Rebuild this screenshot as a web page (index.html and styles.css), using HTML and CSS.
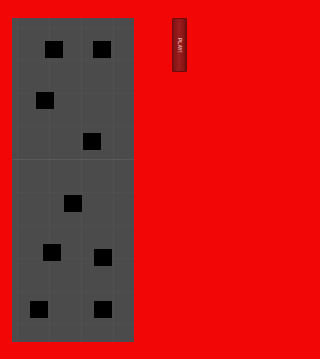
FILE: index.html
```html
<!DOCTYPE html>
<html>
<head>
<meta charset="utf-8">
<link rel="stylesheet" href="styles.css">
</head>
<body>
<div class="screen">
  <div class="board">
    <div class="piece" style="left:33px;top:23px"></div>
    <div class="piece" style="left:81px;top:23px"></div>
    <div class="piece" style="left:24px;top:74px"></div>
    <div class="piece" style="left:71px;top:115px"></div>
    <div class="piece" style="left:52px;top:177px"></div>
    <div class="piece" style="left:31px;top:226px"></div>
    <div class="piece" style="left:82px;top:231px"></div>
    <div class="piece" style="left:18px;top:283px"></div>
    <div class="piece" style="left:82px;top:283px"></div>
  </div>
  <button class="play"><span class="play-label">PLAY!</span></button>
</div>
</body>
</html>
```
FILE: styles.css
```css
html, body {
  margin: 0;
  padding: 0;
  background: #f30606;
}
.screen {
  width: 202px;
  height: 359px;
  display: flex;
  align-items: flex-start;
  padding: 18px 0 0 12px;
  box-sizing: border-box;
}
.board {
  position: relative;
  width: 122px;
  height: 324px;
  background-color: #4b4b4b;
  background-image:
    linear-gradient(to bottom, transparent 141px, rgba(255,255,255,0.06) 141px, rgba(255,255,255,0.06) 142px, transparent 142px),
    linear-gradient(to right, rgba(255,255,255,0.035) 1px, transparent 1px),
    linear-gradient(to bottom, rgba(255,255,255,0.015) 1px, transparent 1px);
  background-size: 100% 100%, 32px 100%, 100% 33px;
  background-position: 0 0, 5px 0, 0 9px;
  flex: none;
}
.piece {
  position: absolute;
  width: 18px;
  height: 17px;
  background: #000;
}
.play {
  margin: 0 0 0 38px;
  padding: 0;
  width: 15px;
  height: 54px;
  border: 1px solid #6a0c0c;
  border-radius: 1px;
  background: linear-gradient(to right, #7c1212, #9c1c1c 45%, #8a1616 80%, #6e0e0e);
  display: flex;
  align-items: center;
  justify-content: center;
  flex: none;
  box-sizing: border-box;
}
.play-label {
  writing-mode: vertical-rl;
  font-family: "Liberation Sans", Arial, sans-serif;
  font-size: 5px;
  font-weight: bold;
  color: #e9b3b3;
  letter-spacing: 0;
  line-height: 1;
}
```
